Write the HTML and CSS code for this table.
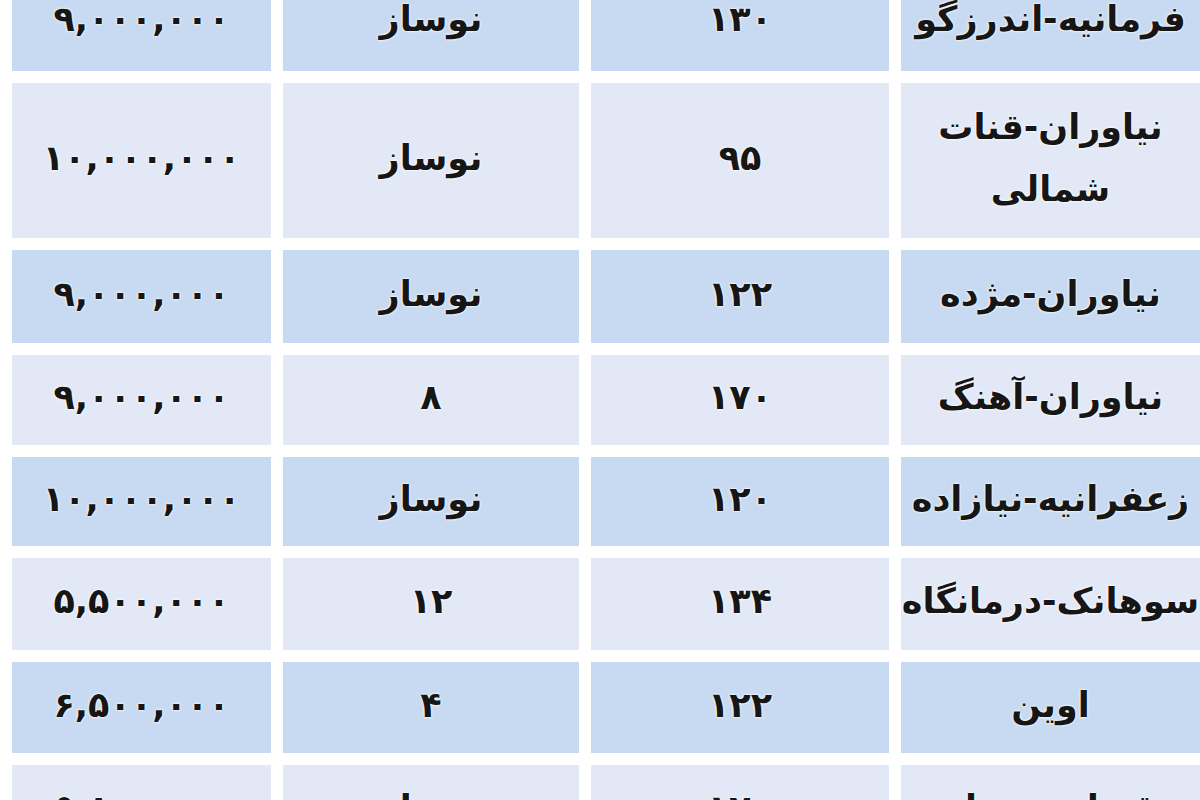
FILE: index.html
```html
<!DOCTYPE html>
<html lang="fa">
<head>
<meta charset="utf-8">
<title>قیمت آپارتمان</title>
<link rel="stylesheet" href="styles.css">
</head>
<body>
<table class="prices" dir="rtl">
  <colgroup>
    <col class="c-loc">
    <col class="c-area">
    <col class="c-age">
    <col class="c-price">
  </colgroup>
  <tbody>
    <tr class="blue r1"><td class="loc">فرمانیه-اندرزگو</td><td>۱۳۰</td><td>نوساز</td><td class="num">۹,۰۰۰,۰۰۰</td></tr>
    <tr class="light r2"><td class="loc wrap">نیاوران-قنات<br>شمالی</td><td>۹۵</td><td>نوساز</td><td class="num">۱۰,۰۰۰,۰۰۰</td></tr>
    <tr class="blue r3"><td class="loc">نیاوران-مژده</td><td>۱۲۲</td><td>نوساز</td><td class="num">۹,۰۰۰,۰۰۰</td></tr>
    <tr class="light r4"><td class="loc">نیاوران-آهنگ</td><td>۱۷۰</td><td>۸</td><td class="num">۹,۰۰۰,۰۰۰</td></tr>
    <tr class="blue r5"><td class="loc">زعفرانیه-نیازاده</td><td>۱۲۰</td><td>نوساز</td><td class="num">۱۰,۰۰۰,۰۰۰</td></tr>
    <tr class="light r6"><td class="loc">سوهانک-درمانگاه</td><td>۱۳۴</td><td>۱۲</td><td class="num">۵,۵۰۰,۰۰۰</td></tr>
    <tr class="blue r7"><td class="loc">اوین</td><td>۱۲۲</td><td>۴</td><td class="num">۶,۵۰۰,۰۰۰</td></tr>
    <tr class="light r8"><td class="loc">قیطریه-بهار</td><td>۱۲۰</td><td>نوساز</td><td class="num">۵,۸۰۰,۰۰۰</td></tr>
  </tbody>
</table>
</body>
</html>
```
FILE: styles.css
```css
html, body {
  margin: 0;
  padding: 0;
  background: #ffffff;
  overflow: hidden;
  width: 1200px;
  height: 800px;
}

.prices {
  margin-top: -40px;
  border-collapse: separate;
  border-spacing: 12px;
  table-layout: fixed;
  width: 1212px;
  font-family: "DejaVu Sans", sans-serif;
  font-weight: bold;
  font-size: 35px;
  color: #161616;
}

.c-loc { width: 299px; }
.c-area { width: 298px; }
.c-age { width: 296px; }
.c-price { width: 259px; }

.prices td {
  text-align: center;
  vertical-align: middle;
  padding: 0 0 6px 0;
  white-space: nowrap;
  text-shadow: 0 0 3px #ffffff, 0 0 2px #ffffff;
  line-height: 62px;
}

.prices td.num {
  letter-spacing: 3px;
}

.prices td.loc {
  letter-spacing: 0;
}

.prices td.loc.wrap {
  white-space: normal;
}

.blue td { background: #c7daf1; }
.light td { background: #e3e8f6; }

.r1 td { height: 93px; }
.r2 td { height: 149px; }
.r3 td { height: 87px; }
.r4 td { height: 84px; }
.r5 td { height: 83px; }
.r6 td { height: 86px; }
.r7 td { height: 85px; }
.r8 td { height: 85px; }
```
